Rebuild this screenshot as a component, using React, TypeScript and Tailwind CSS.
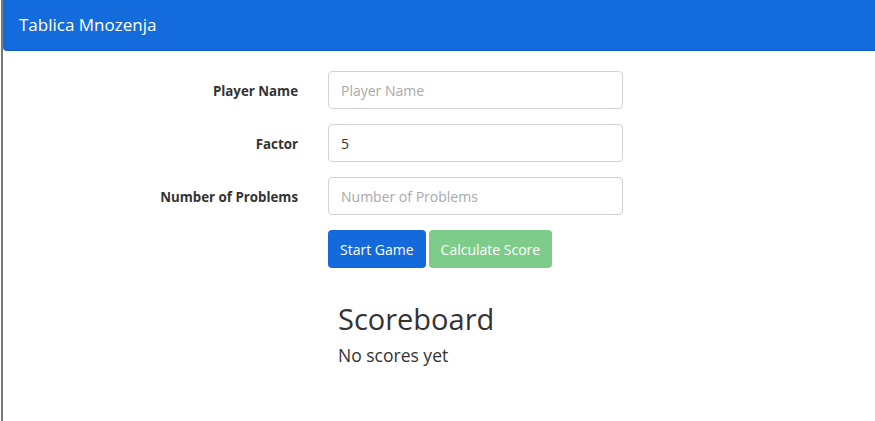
import { useState } from 'react';

const font = { fontFamily: '"Open Sans", "Noto Sans", sans-serif' };

function Field({
  label,
  placeholder,
  value,
  onChange,
}: {
  label: string;
  placeholder: string;
  value: string;
  onChange: (v: string) => void;
}) {
  return (
    <div className="flex items-center h-[38px] mb-[15px]">
      <label className="w-[295px] pt-[3px] text-right text-[13.3px] font-bold text-[#333]">
        {label}
      </label>
      <input
        className="ml-[30px] w-[295px] h-[38px] rounded border border-[#ced4da] bg-white px-3 text-[14px] text-[#333] placeholder:text-[#a9a9a9] focus:outline-none"
        placeholder={placeholder}
        value={value}
        onChange={(e) => onChange(e.target.value)}
      />
    </div>
  );
}

export default function App() {
  const [name, setName] = useState('');
  const [factor, setFactor] = useState('5');
  const [count, setCount] = useState('');

  return (
    <div style={font} className="min-h-[421px] ml-[1px] border-l-2 border-[#7a7a7a] bg-white">
      <nav className="h-[51px] flex items-center px-4 bg-[#146bdb] border-b border-[#0f5cc2] rounded-bl">
        <span className="text-white text-[17px]">Tablica Mnozenja</span>
      </nav>

      <div className="pt-5">
        <Field label="Player Name" placeholder="Player Name" value={name} onChange={setName} />
        <Field label="Factor" placeholder="Factor" value={factor} onChange={setFactor} />
        <Field label="Number of Problems" placeholder="Number of Problems" value={count} onChange={setCount} />

        <div className="flex gap-[3px] ml-[325px] mt-[1px]">
          <button className="h-[38px] px-3 rounded bg-[#1469db] text-white text-[14px]">
            Start Game
          </button>
          <button
            disabled
            className="h-[38px] px-3 rounded bg-[#7dcc89] text-white text-[14px]"
          >
            Calculate Score
          </button>
        </div>

        <div className="ml-[335px] mt-[33px] text-[#333]">
          <h1 className="text-[29px] leading-[36px]">Scoreboard</h1>
          <p className="text-[17.5px] mt-[5px]">No scores yet</p>
        </div>
      </div>
    </div>
  );
}
